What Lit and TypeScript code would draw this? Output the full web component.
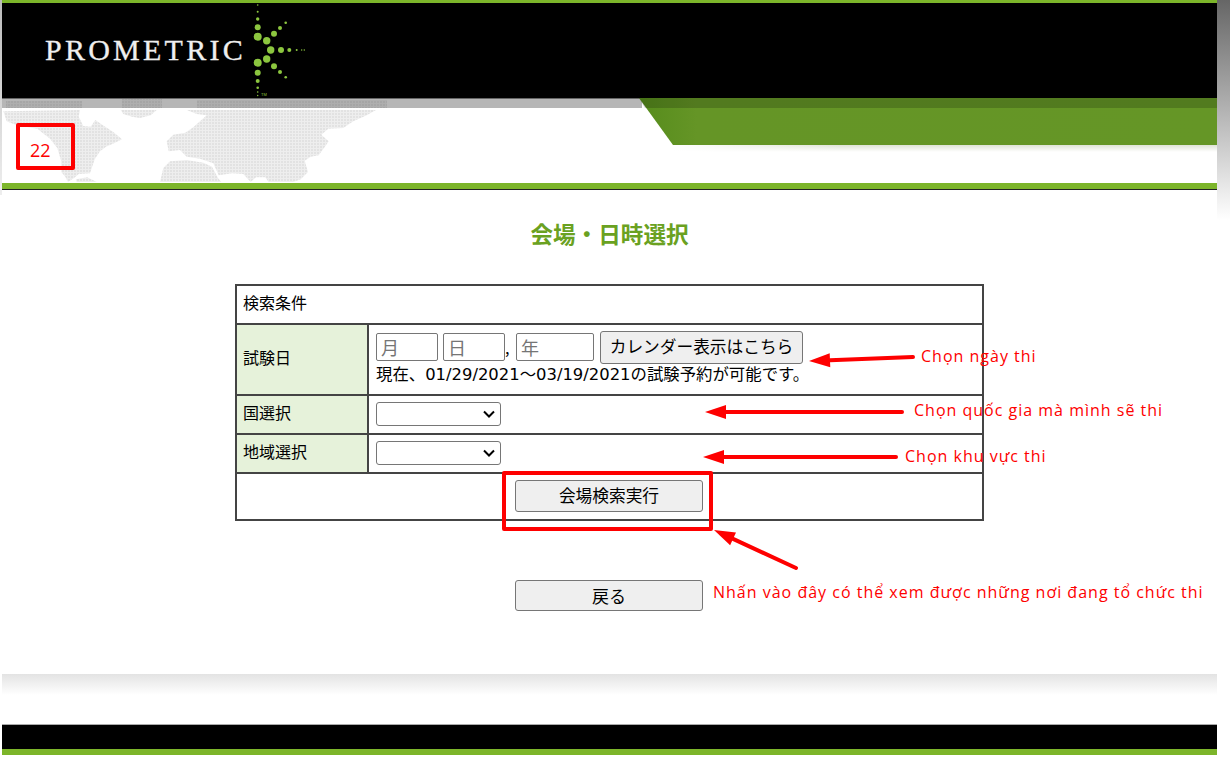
import { LitElement, html, css, svg, unsafeCSS } from "lit";
import { customElement } from "lit/decorators.js";

const JP = unsafeCSS(`"Noto Sans CJK JP", "Noto Sans", sans-serif`);

const dots: [number, number, number][] = [
  [257.7, 5, 0.8], [257.7, 11.7, 1], [257.7, 19, 1.7], [257.7, 27.3, 3], [257.7, 36.7, 4],
  [266.7, 40.7, 3.7], [274, 33.7, 3], [280, 28, 2], [285.7, 22.7, 1.3],
  [270.7, 50, 3.7], [281, 50, 3], [289.3, 50, 2], [296.7, 50, 1], [301.7, 50, 0.7], [304.3, 50, 0.7],
  [266.7, 59, 3.7], [257.7, 62.7, 4], [274, 66.3, 3], [280, 72, 2], [285.7, 77.3, 1.3],
  [257.7, 72.7, 3], [257.7, 81, 2], [257.7, 87.7, 1.3], [257.7, 92, 0.8], [257.7, 95.5, 0.7],
];

// Land outlines traced at 3x, converted to strip coordinates below.
const LAND = [
  "M10 40 L240 36 L236 56 L250 84 L272 86 L286 66 L312 84 L340 102 L366 124 L342 136 L318 146 L300 160 L284 184 L270 226 L236 228 L222 240 L204 252 L196 236 L184 222 L184 190 L172 150 L150 122 L112 92 L50 82 L20 70 Z",
  "M362 36 L470 36 L452 52 L420 60 L396 56 L370 48 Z",
  "M228 244 L262 238 L290 252 L230 252 Z",
  "M560 36 L1128 36 L1100 52 L1060 70 L1030 90 L985 92 L964 110 L986 130 L972 150 L956 172 L932 176 L914 188 L924 222 L902 244 L880 252 L806 252 L796 238 L768 238 L752 252 L730 228 L696 226 L656 232 L640 196 L600 182 L560 176 L540 156 L506 160 L500 130 L520 110 L556 104 L580 88 L600 70 L620 52 L590 48 Z",
  "M480 252 L490 210 L510 190 L560 186 L610 194 L636 206 L654 240 L664 252 Z",
].map((d) =>
  d.replace(/(\d+) (\d+)/g, (_m, x, y) => `${(+x / 3 - 2).toFixed(1)} ${(+y / 3).toFixed(1)}`)
);

const CHEVRON = unsafeCSS(
  `url("data:image/svg+xml,%3Csvg xmlns='http://www.w3.org/2000/svg' width='12' height='8' viewBox='0 0 12 8'%3E%3Cpath d='M1 1.5 L6 6.5 L11 1.5' fill='none' stroke='%23000' stroke-width='2'/%3E%3C/svg%3E")`
);

@customElement("app-root")
export class AppRoot extends LitElement {
  static styles = css`
    :host {
      display: block;
      position: relative;
      width: 1230px;
      height: 784px;
      background: #fff;
      font-family: ${JP};
      color: #000;
      overflow: hidden;
    }
    .edge {
      position: absolute;
      top: 0;
      width: 13px;
      height: 220px;
      right: 0;
      background: linear-gradient(#666, #fff);
    }
    .edge.left {
      left: 0;
      right: auto;
      width: 2px;
      height: 195px;
      background: linear-gradient(#bbb, #eee);
    }
    .page {
      margin-left: 2px;
      width: 1215px;
      display: flex;
      flex-direction: column;
      align-items: stretch;
    }
    .topline { height: 3px; background: #7cb52a; }
    .black {
      height: 95px;
      background: #000;
      position: relative;
      overflow: hidden;
    }
    .wordmark {
      position: absolute;
      left: 43px;
      top: 27px;
      font: 30px/40px "Liberation Serif", serif;
      letter-spacing: 3.25px;
      color: #efefef;
      -webkit-text-stroke: 0.3px #efefef;
    }
    .star { position: absolute; left: -2px; top: -3px; }
    .tm {
      position: absolute;
      left: 259px;
      top: 89px;
      font: 4px/5px "Liberation Sans", sans-serif;
      color: #8cc63f;
    }
    .banner { height: 85px; background: #fff; }
    .banner svg { display: block; }
    .stripe { height: 6px; background: #7cb52a; border-bottom: 1px solid #222; }
    h1 {
      margin: 29px 0 0;
      height: 65px;
      font: bold 22.6px/30px ${JP};
      color: #6aa121;
      text-align: center;
    }
    table {
      margin-left: 233px;
      width: 749px;
      height: 236px;
      border-collapse: collapse;
      table-layout: fixed;
      font-size: 16px;
      line-height: 20px;
    }
    .col1 { width: 132px; }
    td {
      border: 2px solid #444;
      padding: 0 6px 6px;
      vertical-align: middle;
    }
    td.label { background: #e6f2da; }
    tr.head { height: 39px; }
    tr.date { height: 71px; }
    tr.sel { height: 39px; }
    tr.last { height: 47px; }
    td.field { padding: 0 7px 2px; }
    tr.date td.field { padding-bottom: 4px; }
    .dateline { display: flex; align-items: center; height: 33px; }
    input {
      box-sizing: border-box;
      height: 28px;
      border: 1px solid #767676;
      border-radius: 2px;
      font: 18px ${JP};
      padding: 0 4px;
      background: #fff;
    }
    input::placeholder { color: #757575; }
    .m { width: 62px; margin-right: 5px; }
    .d { width: 62px; }
    .y { width: 78px; margin-right: 6px; }
    .comma { width: 11px; font-size: 16px; line-height: 28px; }
    button {
      box-sizing: border-box;
      background: #efefef;
      border: 1px solid #767676;
      border-radius: 3px;
      color: #000;
      padding: 0;
      white-space: nowrap;
      font: 16.7px ${JP};
    }
    .cal { width: 203px; height: 33px; padding-bottom: 3px; }
    .note {
      font: 16.4px/20px "DejaVu Sans", ${JP};
      white-space: nowrap;
      padding-top: 1px;
    }
    select {
      display: block;
      box-sizing: border-box;
      width: 125px;
      height: 24px;
      appearance: none;
      background: #fff ${CHEVRON} no-repeat right 5px center;
      border: 1px solid #767676;
      border-radius: 3px;
    }
    td.action { text-align: left; padding: 0 0 2px; }
    .wide { display: block; width: 188px; height: 32px; }
    .go { margin-left: 278px; padding-bottom: 2px; }
    .back { margin: 59px 0 0 513px; height: 31px; font-size: 17px; }
    .gap { height: 63px; }
    .fade { height: 21px; background: linear-gradient(#e3e3e3, #fff); }
    .spacer { height: 29px; }
    .footer { height: 25px; background: #000; border-top: 1px solid #aaa; box-sizing: border-box; }
    .footline { height: 6px; background: #7cb52a; }
    .red {
      position: absolute;
      border: 4px solid #fe0000;
      border-radius: 2px;
      box-sizing: border-box;
    }
    .box1 { left: 16px; top: 123px; width: 59px; height: 47px; }
    .box2 { left: 502px; top: 471px; width: 211px; height: 60px; }
    .arrows { position: absolute; left: 0; top: 0; }
    .note-red {
      position: absolute;
      font: 16px/22px "Open Sans", "Noto Sans", sans-serif;
      letter-spacing: 1px;
      color: #fe0000;
      white-space: nowrap;
    }
    .num { font-size: 18px; letter-spacing: 0; }
    .n0 { left: 30px; top: 139px; }
    .n1 { left: 921px; top: 345px; }
    .n2 { left: 914px; top: 399px; }
    .n3 { left: 905px; top: 445px; }
    .n4 { left: 713px; top: 581px; }
  `;

  private renderMap() {
    return html`<svg width="1215" height="85" viewBox="0 0 1215 85">
      <defs>
        <pattern id="dots" width="3" height="3" patternUnits="userSpaceOnUse">
          <rect width="3" height="3" fill="#eeeeee"></rect>
          <rect width="2" height="2" fill="#e2e2e2"></rect>
        </pattern>
        <pattern id="sdots" width="3" height="3" patternUnits="userSpaceOnUse">
          <rect width="3" height="3" fill="#aeaeae"></rect>
          <rect width="2" height="2" fill="#a6a6a6"></rect>
        </pattern>
        <linearGradient id="gr" x1="0" x2="1" y1="0" y2="0">
          <stop offset="0" stop-color="#568c1c"></stop>
          <stop offset="0.1" stop-color="#659526"></stop>
          <stop offset="1" stop-color="#659626"></stop>
        </linearGradient>
        <linearGradient id="sh" x1="0" x2="0" y1="0" y2="1">
          <stop offset="0" stop-color="#dfe3d6"></stop>
          <stop offset="1" stop-color="#fff"></stop>
        </linearGradient>
        <linearGradient id="shl" x1="0" x2="1" y1="0" y2="0">
          <stop offset="0" stop-color="#fff"></stop>
          <stop offset="1" stop-color="#fff" stop-opacity="0"></stop>
        </linearGradient>
      </defs>
      ${LAND.map((d) => svg`<path d=${d} fill="url(#dots)"></path>`)}
      <rect y="0" width="638" height="1" fill="#666"></rect>
      <rect y="1" width="640" height="9" fill="#b6b6b6"></rect>
      <g fill="url(#sdots)">
        <rect x="4" y="3" width="76" height="7"></rect>
        <rect x="120" y="1" width="40" height="9"></rect>
        <rect x="195" y="2" width="190" height="8"></rect>
      </g>
      <rect x="670" y="47" width="545" height="7" fill="url(#sh)"></rect>
      <rect x="670" y="47" width="170" height="7" fill="url(#shl)"></rect>
      <polygon points="637,0 1215,0 1215,47 671,47" fill="url(#gr)"></polygon>
      <polygon points="637,0 1215,0 1215,10 643,10" fill="#000" opacity="0.18"></polygon>
    </svg>`;
  }

  private arrow(x1: number, y1: number, x2: number, y2: number) {
    const a = Math.atan2(y2 - y1, x2 - x1);
    const L = 21, W = 7;
    const bx = x2 - Math.cos(a) * L, by = y2 - Math.sin(a) * L;
    const nx = -Math.sin(a) * W, ny = Math.cos(a) * W;
    return svg`<line x1=${x1} y1=${y1} x2=${bx} y2=${by} stroke="#fe0000" stroke-width="4" stroke-linecap="round"></line>
      <polygon points="${x2},${y2} ${bx + nx},${by + ny} ${bx - nx},${by - ny}" fill="#fe0000"></polygon>`;
  }

  render() {
    return html`
      <div class="page">
        <div class="topline"></div>
        <div class="black">
          <span class="wordmark">PROMETRIC</span>
          <svg class="star" width="320" height="100" viewBox="0 0 320 100">
            ${dots.map(([x, y, r]) => svg`<circle cx=${x} cy=${y} r=${r} fill="#8cc63f"></circle>`)}
          </svg>
          <span class="tm">TM</span>
        </div>
        <div class="banner">${this.renderMap()}</div>
        <div class="stripe"></div>
        <h1>会場・日時選択</h1>
        <table>
          <colgroup><col class="col1" /><col /></colgroup>
          <tr class="head"><td colspan="2">検索条件</td></tr>
          <tr class="date">
            <td class="label">試験日</td>
            <td class="field">
              <div class="dateline">
                <input class="m" placeholder="月" />
                <input class="d" placeholder="日" />
                <span class="comma">,</span>
                <input class="y" placeholder="年" />
                <button class="cal">カレンダー表示はこちら</button>
              </div>
              <div class="note">現在、01/29/2021～03/19/2021の試験予約が可能です。</div>
            </td>
          </tr>
          <tr class="sel">
            <td class="label">国選択</td>
            <td class="field"><select></select></td>
          </tr>
          <tr class="sel">
            <td class="label">地域選択</td>
            <td class="field"><select></select></td>
          </tr>
          <tr class="last">
            <td class="action" colspan="2"><button class="wide go">会場検索実行</button></td>
          </tr>
        </table>
        <button class="wide back">戻る</button>
        <div class="gap"></div>
        <div class="fade"></div>
        <div class="spacer"></div>
        <div class="footer"></div>
        <div class="footline"></div>
      </div>
      <div class="edge"></div>
      <div class="edge left"></div>
      <div class="red box1"></div>
      <div class="red box2"></div>
      <span class="note-red num n0">22</span>
      <span class="note-red n1">Chọn ngày thi</span>
      <span class="note-red n2">Chọn quốc gia mà mình sẽ thi</span>
      <span class="note-red n3">Chọn khu vực thi</span>
      <span class="note-red n4">Nhấn vào đây có thể xem được những nơi đang tổ chức thi</span>
      <svg class="arrows" width="1230" height="784">
        ${this.arrow(913, 357, 809, 361)}
        ${this.arrow(902, 412, 705, 412)}
        ${this.arrow(896, 457, 703, 457)}
        ${this.arrow(796, 568, 714, 530)}
      </svg>
    `;
  }
}
